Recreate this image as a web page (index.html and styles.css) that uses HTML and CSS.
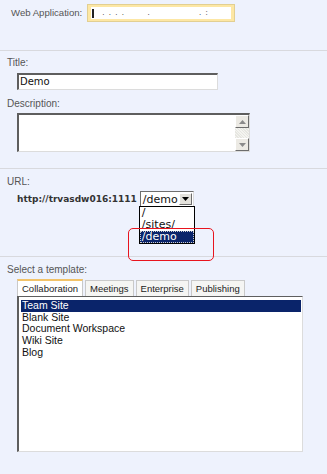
FILE: index.html
```html
<!DOCTYPE html>
<html>
<head>
<meta charset="utf-8">
<link rel="stylesheet" href="styles.css">
</head>
<body>
<div class="page">
  <section class="sec sec-app">
    <div class="app-row">
      <span class="label app-label">Web Application:</span>
      <div class="app-input"><div class="app-inner"><span class="caret"></span><span class="dots">. . . . &nbsp; &nbsp; &nbsp; . &nbsp; &nbsp; &nbsp; &nbsp; &nbsp; &nbsp; &nbsp; . :</span></div></div>
    </div>
  </section>
  <section class="sec sec-title">
    <div class="label">Title:</div>
    <div class="text-input">Demo</div>
    <div class="label desc-label">Description:</div>
    <div class="textarea">
      <div class="scrollbar">
        <div class="sb-btn"><svg width="7" height="4" viewBox="0 0 7 4"><path d="M0 4 L3.5 0 L7 4Z" fill="#8a8a8a"/></svg></div>
        <div class="sb-track"></div>
        <div class="sb-btn"><svg width="7" height="4" viewBox="0 0 7 4"><path d="M0 0 L3.5 4 L7 0Z" fill="#8a8a8a"/></svg></div>
      </div>
    </div>
  </section>
  <section class="sec sec-url">
    <div class="label">URL:</div>
    <div class="url-row">
      <span class="url-text">http://trvasdw016:1111</span>
      <div class="select-wrap">
        <div class="select">
          <span class="select-val">/demo</span>
          <span class="select-btn"><svg width="7" height="4" viewBox="0 0 7 4"><path d="M0 0 L3.5 4 L7 0Z" fill="#000"/></svg></span>
        </div>
        <ul class="dropdown">
          <li>/</li>
          <li>/sites/</li>
          <li class="sel">/demo</li>
        </ul>
        <div class="highlight"></div>
      </div>
    </div>
  </section>
  <section class="sec sec-tpl">
    <div class="label">Select a template:</div>
    <div class="tabs">
      <span class="tab active">Collaboration</span>
      <span class="tab">Meetings</span>
      <span class="tab">Enterprise</span>
      <span class="tab">Publishing</span>
    </div>
    <ul class="listbox">
      <li class="sel">Team Site</li>
      <li>Blank Site</li>
      <li>Document Workspace</li>
      <li>Wiki Site</li>
      <li>Blog</li>
    </ul>
  </section>
</div>
</body>
</html>
```

FILE: styles.css
```css
* { box-sizing: border-box; }
html, body { margin: 0; padding: 0; }
body {
  background: #eef2fd;
  width: 327px;
  height: 474px;
  overflow: hidden;
  font-family: "Liberation Sans", Arial, sans-serif;
}
.page { display: flex; flex-direction: column; }
.sec { border-bottom: 1px solid #d8d9de; }
.label { font-size: 10px; color: #555; line-height: 12px; }

.sec-app { height: 51px; padding: 4px 0 0 11px; }
.app-row { display: flex; align-items: center; gap: 5px; }
.app-label { font-size: 9.6px; }
.app-input {
  width: 148px; height: 18px;
  border: 1px solid #e2cf92;
  background: #fde7a4;
  padding: 2px 3px;
}
.app-inner {
  background: #fff; height: 12px; position: relative;
  display: flex; align-items: center; overflow: hidden;
  font-size: 8px; color: #222; line-height: 12px;
}
.caret { width: 2px; height: 9px; background: #222; margin-left: 1px; margin-right: 8px; }
.dots { white-space: nowrap; letter-spacing: 1px; }

.sec-title { height: 118px; padding: 6px 0 0 7px; }
.text-input {
  margin: 4px 0 0 10px;
  width: 201px; height: 17px;
  background: #fff;
  border: 1px solid #dcdcdc;
  border-top: 2px solid #5e5e5e; border-left: 2px solid #5e5e5e;
  font-family: "DejaVu Sans", Verdana, sans-serif;
  font-size: 10px; line-height: 13px; padding-left: 1px; color: #111;
}
.desc-label { margin-top: 8px; }
.textarea {
  margin: 3px 0 0 10px;
  width: 233px; height: 39px;
  background: #fff;
  border: 1px solid #dcdcdc;
  border-top: 2px solid #5e5e5e; border-left: 2px solid #5e5e5e;
  display: flex; justify-content: flex-end;
}
.scrollbar { width: 14px; display: flex; flex-direction: column; background: #e9e9e3; }
.sb-btn {
  height: 13px; background: #eceae4;
  border: 1px solid #fff; border-right-color: #6d6d6d; border-bottom-color: #6d6d6d;
  display: flex; align-items: center; justify-content: center;
}
.sb-track { flex: 1; background: repeating-linear-gradient(45deg, #e6e6e1 0 1px, #f4f4f0 1px 2px); }

.sec-url { height: 88px; padding: 7px 0 0 7px; }
.url-row { display: flex; align-items: flex-start; margin: 3px 0 0 10px; }
.url-text {
  font-family: "DejaVu Sans", Verdana, sans-serif; font-weight: bold;
  font-size: 9px; color: #333; line-height: 15px; margin-top: 1px; margin-right: 3px;
}
.select-wrap { position: relative; }
.select {
  width: 54px; height: 16px; background: #fff;
  border: 1px solid #7f9db9; border-color: #6f6f6f #dcdcdc #dcdcdc #6f6f6f;
  display: flex; align-items: center; justify-content: space-between;
  padding-left: 2px;
  font-family: "DejaVu Sans", Verdana, sans-serif; font-size: 11px; color: #111;
}
.select-btn {
  width: 13px; height: 12px; margin-right: 1px;
  background: #e4e2dc;
  border: 1px solid #fff; border-right-color: #6d6d6d; border-bottom-color: #6d6d6d;
  display: flex; align-items: center; justify-content: center;
}
.dropdown {
  position: absolute; left: -1px; top: 15px;
  width: 56px; margin: 0; padding: 0; list-style: none;
  background: #fff; border: 1px solid #000;
  font-family: "DejaVu Sans", Verdana, sans-serif; font-size: 11px; line-height: 12px; color: #111;
}
.dropdown li { padding-left: 2px; height: 12px; }
.dropdown li.sel { background: #0a246a; color: #fff; outline: 1px dotted #ccc; outline-offset: -1px; }
.highlight {
  position: absolute; left: -12px; top: 37px;
  width: 86px; height: 33px;
  border: 1px solid #e8141e; border-radius: 5px;
}

.sec-tpl { border-bottom: none; padding: 7px 0 0 7px; }
.tabs { display: flex; gap: 2px; margin: 3px 0 0 10px; height: 17px; align-items: flex-end; }
.tab {
  height: 16px; padding: 0 4px;
  background: #f5f5f3; border: 1px solid #c9c9c9; border-bottom: none;
  font-size: 9.5px; line-height: 15px; color: #222;
}
.tab.active { height: 17px; background: #fff; border-top: 2px solid #f2c36a; padding: 0 4px; line-height: 15px; }
.listbox {
  margin: 0 0 0 10px; padding: 3px 1px 0 2px; list-style: none;
  width: 286px; height: 156px; background: #fff;
  border: 1px solid #dcdcdc; border-left: 2px solid #5e5e5e; border-top: 1px solid #5e5e5e;
  font-size: 10.5px; line-height: 11.7px; color: #111;
}
.listbox li { padding-left: 1px; }
.listbox li.sel { background: #0a246a; color: #fff; }
```
